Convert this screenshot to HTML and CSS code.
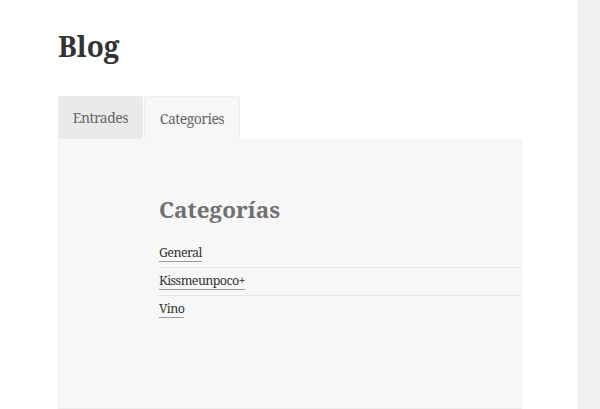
FILE: index.html
```html
<!doctype html>
<html lang="es">
    <head>
        <meta charset="UTF-8" />
        <meta name="viewport" content="width=device-width, initial-scale=1.0" />
        <title>Blog</title>
        <link rel="stylesheet" href="styles.css">
    </head>
    <body>
        <div class="page">
            <h1 class="page-title">Blog</h1>
            <div class="tabs">
                <a class="tab" href="#">Entrades</a>
                <a class="tab active" href="#">Categories</a>
            </div>
            <div class="panel">
                <h2>Categorías</h2>
                <ul class="cat-list">
                    <li><a href="#">General</a></li>
                    <li><a href="#">Kissmeunpoco+</a></li>
                    <li><a href="#">Vino</a></li>
                </ul>
            </div>
        </div>
        <div class="sidebar"></div>
    </body>
</html>
```

FILE: styles.css
```css
body {
    margin: 0;
    font-family: "Noto Serif", "DejaVu Serif", serif;
    background-color: #fff;
    color: #333;
    display: flex;
    height: 100vh;
    overflow: hidden;
}
.page {
    flex: 1;
    display: flex;
    flex-direction: column;
    padding: 0 0 0 58px;
}
.page-title {
    margin: 28px 0 0;
    font-size: 28px;
    line-height: 36px;
    font-weight: 700;
    color: #333;
}
.tabs {
    display: flex;
    margin-top: 32px;
    height: 43px;
}
.tab {
    display: flex;
    align-items: center;
    color: #666;
    text-decoration: none;
    font-size: 14px;
    letter-spacing: -0.5px;
    border-radius: 3px 3px 0 0;
}
.tab:first-child {
    width: 85px;
    justify-content: center;
    background-color: #eaeaea;
}
.tab.active {
    width: 94px;
    justify-content: center;
    background-color: #f7f7f7;
    border: 1px solid #ececec;
    border-bottom: none;
    margin-left: 1px;
}
.panel {
    width: 464px;
    flex: 1;
    background-color: #f7f7f7;
    border: 1px solid #efefef;
    border-top: none;
    border-top-right-radius: 3px;
    padding: 56px 0 0 100px;
    box-sizing: border-box;
}
.panel h2 {
    margin: 0 0 14px;
    font-size: 22.5px;
    line-height: 30px;
    color: #707070;
}
.cat-list {
    list-style: none;
    margin: 0;
    padding: 0;
}
.cat-list li {
    height: 27px;
    display: flex;
    align-items: center;
    border-top: 1px solid #e6e6e6;
}
.cat-list li:first-child {
    height: 28px;
    border-top: none;
}
.cat-list a {
    color: #333;
    font-size: 12.5px;
    letter-spacing: -0.6px;
    text-decoration: none;
    border-bottom: 1px solid #999;
    line-height: 16px;
}
.sidebar {
    width: 21px;
    background-color: #f1f1f1;
    border-left: 1px solid #e8e8e8;
}
```
